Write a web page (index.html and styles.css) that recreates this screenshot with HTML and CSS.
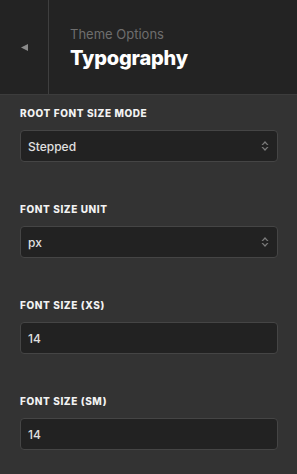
FILE: index.html
```html
<!DOCTYPE html>
<html lang="en">
<head>
    <meta charset="UTF-8">
    <meta name="viewport" content="width=device-width, initial-scale=1.0">
    <title>Typography</title>
    <link rel="stylesheet" href="styles.css">
</head>
<body>
    <div class="panel">
        <div class="header">
            <button class="back" aria-label="Back">
                <svg width="7" height="7" viewBox="0 0 7 7"><polygon points="7,0 7,7 0,3.5" fill="#8a8a8a"/></svg>
            </button>
            <div class="titles">
                <div class="subtitle">Theme Options</div>
                <div class="title">Typography</div>
            </div>
        </div>

        <div class="fields">
            <div class="field">
                <label>Root Font Size Mode</label>
                <div class="control select">
                    <span>Stepped</span>
                    <svg class="arrows" width="8" height="12" viewBox="0 0 8 12"><path d="M0.5 5L4 1L7.5 5L6 5L4 3L2 5Z M0.5 7L4 11L7.5 7L6 7L4 9L2 7Z" fill="#7c7c7c"/></svg>
                </div>
            </div>

            <div class="field">
                <label>Font Size Unit</label>
                <div class="control select">
                    <span>px</span>
                    <svg class="arrows" width="8" height="12" viewBox="0 0 8 12"><path d="M0.5 5L4 1L7.5 5L6 5L4 3L2 5Z M0.5 7L4 11L7.5 7L6 7L4 9L2 7Z" fill="#7c7c7c"/></svg>
                </div>
            </div>

            <div class="field">
                <label>Font Size (XS)</label>
                <div class="control"><span>14</span></div>
            </div>

            <div class="field">
                <label>Font Size (SM)</label>
                <div class="control"><span>14</span></div>
            </div>
        </div>
    </div>
</body>
</html>
```

FILE: styles.css
```css
body {
    margin: 0;
    font-family: Inter, "Noto Sans", sans-serif;
    background-color: #333333;
    color: #e6e6e6;
}

.panel {
    width: 297px;
    height: 474px;
    overflow: hidden;
}

.header {
    display: flex;
    height: 94px;
    background-color: #232323;
    border-bottom: 1px solid #3c3c3c;
}

.back {
    width: 49px;
    border: none;
    border-right: 1px solid #3f3f3f;
    background: transparent;
    padding: 0 0 0 1px;
    display: flex;
    align-items: center;
    justify-content: center;
}

.titles {
    padding: 26px 0 0 21px;
}

.subtitle {
    font-size: 13px;
    line-height: 16px;
    color: #6e6e6e;
}

.title {
    margin-top: 4px;
    font-size: 20px;
    line-height: 24px;
    font-weight: 800;
    color: #ffffff;
    letter-spacing: -0.2px;
}

.fields {
    padding: 12px 19px 0 20px;
}

.field {
    margin-bottom: 41px;
}

.field label {
    display: block;
    font-size: 10px;
    line-height: 12px;
    font-weight: 800;
    letter-spacing: 0.6px;
    text-transform: uppercase;
    color: #f2f2f2;
    margin-bottom: 11px;
}

.control {
    display: flex;
    align-items: center;
    justify-content: space-between;
    height: 30px;
    padding: 0 8px 0 7px;
    background-color: #222222;
    border: 1px solid #454545;
    border-radius: 4px;
    font-size: 12px;
    font-weight: 500;
    color: #e0e0e0;
}
```
